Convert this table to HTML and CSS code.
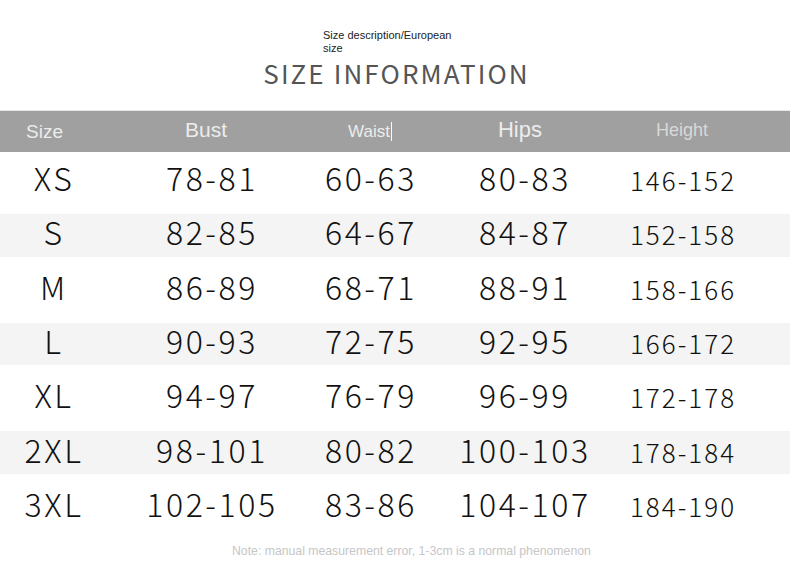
FILE: index.html
```html
<!DOCTYPE html>
<html>
<head>
<meta charset="utf-8">
<link rel="stylesheet" href="styles.css">
</head>
<body>
<div class="page">
  <div class="desc">Size description/European size</div>
  <h1 class="title">SIZE INFORMATION</h1>
  <div class="table">
    <div class="row head">
      <div class="c c1 h-size">Size</div>
      <div class="c c2 h-bust">Bust</div>
      <div class="c c3 h-waist"><span class="caret">Waist</span></div>
      <div class="c c4 h-hips">Hips</div>
      <div class="c c5 h-height">Height</div>
    </div>
    <div class="body">
      <div class="row"><div class="c">XS</div><div class="c">78-81</div><div class="c">60-63</div><div class="c">80-83</div><div class="c sm">146-152</div></div>
      <div class="row shade"><div class="c">S</div><div class="c">82-85</div><div class="c">64-67</div><div class="c">84-87</div><div class="c sm">152-158</div></div>
      <div class="row"><div class="c">M</div><div class="c">86-89</div><div class="c">68-71</div><div class="c">88-91</div><div class="c sm">158-166</div></div>
      <div class="row shade"><div class="c">L</div><div class="c">90-93</div><div class="c">72-75</div><div class="c">92-95</div><div class="c sm">166-172</div></div>
      <div class="row"><div class="c">XL</div><div class="c">94-97</div><div class="c">76-79</div><div class="c">96-99</div><div class="c sm">172-178</div></div>
      <div class="row shade"><div class="c">2XL</div><div class="c">98-101</div><div class="c">80-82</div><div class="c">100-103</div><div class="c sm">178-184</div></div>
      <div class="row"><div class="c">3XL</div><div class="c">102-105</div><div class="c">83-86</div><div class="c">104-107</div><div class="c sm">184-190</div></div>
    </div>
  </div>
  <div class="note">Note: manual measurement error, 1-3cm is a normal phenomenon</div>
</div>
</body>
</html>
```
FILE: styles.css
```css
html, body {
  margin: 0;
  padding: 0;
  background: #ffffff;
}
.page {
  width: 790px;
  height: 580px;
  position: relative;
  overflow: hidden;
}
.desc {
  margin: 29px 0 0 323px;
  width: 135px;
  font-family: "Liberation Sans", Arial, sans-serif;
  font-size: 11px;
  line-height: 13px;
  color: #222;
}
.title {
  margin: 3px 0 0 0;
  text-align: center;
  padding-left: 3px;
  font-family: "Noto Sans CJK SC", "Noto Sans", sans-serif;
  font-weight: 400;
  font-size: 26px;
  line-height: 30px;
  letter-spacing: 2.1px;
  color: #555;
}
.table {
  margin-top: 22px;
}
.body {
  padding-top: 2px;
}
.row {
  display: grid;
  grid-template-columns: 106px 210px 108px 200px 116px 50px;
  height: 54.3px;
  align-items: center;
  padding: 6px 0;
  box-sizing: border-box;
  background-clip: content-box;
  font-family: "Noto Sans CJK SC", "Noto Sans", sans-serif;
  font-weight: 300;
  font-size: 32px;
  letter-spacing: 2.6px;
  color: #111;
}
.row.shade {
  background-color: #f4f4f4;
}
.c {
  text-align: center;
  white-space: nowrap;
  line-height: 30px;
  padding-left: 2px;
  padding-bottom: 8px;
}
.c.sm {
  font-size: 26px;
  letter-spacing: 2px;
  padding-top: 0;
  padding-bottom: 2px;
}
.row.head {
  height: 42px;
  padding: 0;
  align-items: start;
  background: #a0a0a0;
  border-top: 1px solid #e6e6e6;
  font-family: "Liberation Sans", Arial, sans-serif;
  font-weight: 400;
  letter-spacing: 0;
  color: #ececec;
}
.row.head .c {
  padding: 0;
  line-height: 1;
}
.h-size {
  font-size: 19px;
  text-align: left !important;
  padding-left: 26px !important;
  padding-top: 11px !important;
}
.h-bust {
  font-size: 21px;
  padding-right: 10px !important;
  padding-top: 8px !important;
}
.h-waist {
  font-size: 17px;
  padding-top: 11.5px !important;
}
.caret {
  border-right: 1px solid #fafafa;
  padding-right: 1px;
}
.h-hips {
  font-size: 22px;
  padding-right: 8px !important;
  padding-top: 7.5px !important;
}
.h-height {
  font-size: 18px;
  color: #d8d8d8;
  padding-top: 10px !important;
}
.note {
  margin-top: 10px;
  margin-left: 232px;
  font-family: "Liberation Sans", Arial, sans-serif;
  font-size: 12.25px;
  color: #c6c6c6;
}
```
